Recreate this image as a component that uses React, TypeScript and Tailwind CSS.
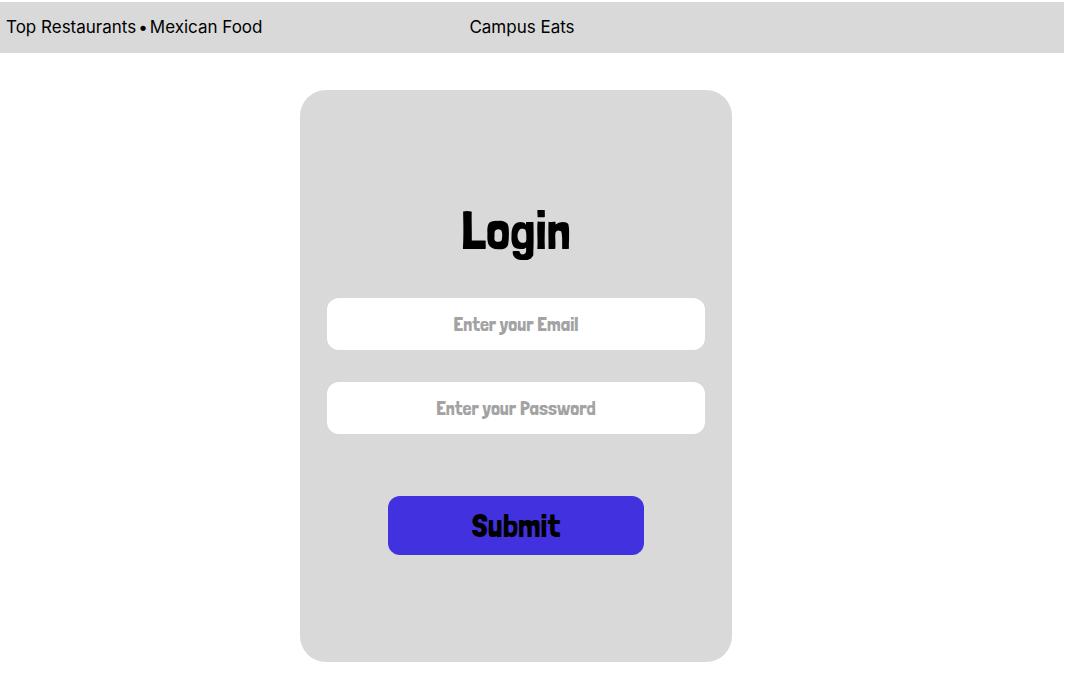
const displayFont = "font-['Londrina_Solid','Roboto_Condensed','Liberation_Sans',sans-serif] font-normal";

const fieldStyle =
  "h-[52px] w-full rounded-xl bg-white px-4 text-center text-xl text-black outline-none placeholder:text-[#a3a3a3] placeholder:opacity-100";

export default function App() {
  return (
    <div className="min-h-screen bg-white pt-0.5 text-black">
      <header className="mr-1 grid h-[51px] grid-cols-[1fr_auto_1fr] items-center bg-[#d9d9d9] pr-[26px] pl-1.5 font-['Inter',sans-serif] text-[17px]">
        <nav className="flex items-center gap-0.5">
          <a href="#top-restaurants">Top Restaurants</a>
          <span>•</span>
          <a href="#mexican-food">Mexican Food</a>
        </nav>
        <a href="#home">Campus Eats</a>
      </header>

      <main className="flex justify-center pt-[37px] pr-9 pb-8">
        <form
          className={`flex w-full max-w-[432px] flex-col items-center rounded-[26px] bg-[#d9d9d9] px-[27px] py-[107px] ${displayFont}`}
          onSubmit={(event) => event.preventDefault()}
        >
          <h1 className="text-[54px] leading-[66px]">Login</h1>
          <div className="mt-[35px] flex w-full flex-col gap-8">
            <input type="email" aria-label="Email" placeholder="Enter your Email" className={fieldStyle} />
            <input type="password" aria-label="Password" placeholder="Enter your Password" className={fieldStyle} />
          </div>
          <button type="submit" className="mt-[62px] h-[59px] w-64 rounded-xl bg-[#4131df] text-[33px]">
            Submit
          </button>
        </form>
      </main>
    </div>
  );
}
